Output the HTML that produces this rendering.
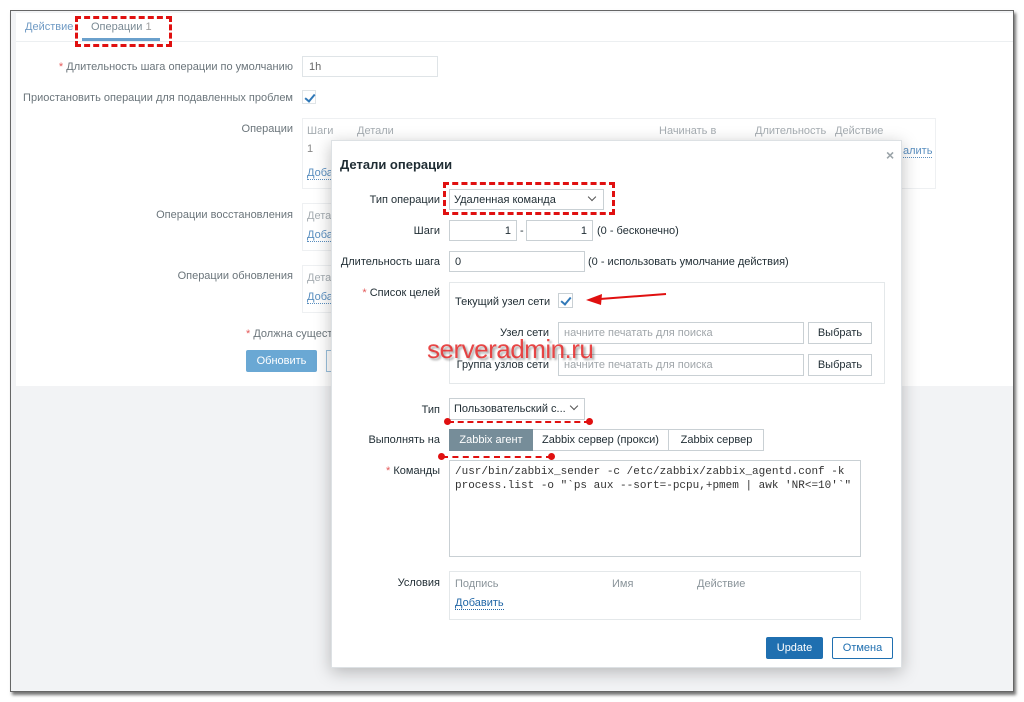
<!DOCTYPE html>
<html><head><meta charset="utf-8"><style>
*{box-sizing:border-box;margin:0;padding:0}
body{width:1024px;height:702px;background:#fff;font-family:"Liberation Sans",Arial,sans-serif;font-size:11px;color:#1f2c33;position:relative;overflow:hidden}
.a{position:absolute;white-space:nowrap}
.frame{left:10px;top:10px;width:1004px;height:682px;border:1px solid #666;background:#f2f3f5;box-shadow:2px 3px 3px rgba(0,0,0,.55)}
.panel{left:16px;top:13px;width:997px;height:373px;background:#fff}
.lbl{color:#6b757b;text-align:right}
.in{border:1px solid #dfe4e7;background:#fff}
.din{border:1px solid #c9d0d4;background:#fff}
.st{color:#e45959}
.lnk{color:#5a8fc0;border-bottom:1px dotted #5a8fc0}
.dl{color:#1f2c33;text-align:right}
.btn{border:1px solid #c9d0d4;background:#fff;text-align:center;line-height:20px;color:#1f2c33}
.red{border:3px dashed #e01010}
.chev{position:absolute;width:6px;height:6px;border-right:1.3px solid #555;border-bottom:1.3px solid #555;transform:rotate(45deg)}
.chk{border:1px solid #c9d0d4;background:#fff;width:15px;height:15px}
.chk:after{content:"";position:absolute;left:4px;top:1px;width:4px;height:8px;border-right:2px solid #3179b8;border-bottom:2px solid #3179b8;transform:rotate(40deg)}
.dots{border-top:2px dashed #e01010;height:0}
.dot{width:7px;height:7px;border-radius:50%;background:#e01010}
</style></head><body>
<div class="a frame"></div>
<div class="a panel"></div>
<div class="a" style="left:16px;top:41px;width:997px;height:1px;background:#eceff1"></div>
<div class="a" style="left:25px;top:21px;color:#6f9ac4">Действие</div>
<div class="a" style="left:91px;top:21px;color:#7a8a94">Операции <span style="color:#a0a0a0">1</span></div>
<div class="a" style="left:82px;top:38px;width:78px;height:3px;background:#6aa0cc"></div>
<div class="a red" style="left:75px;top:16px;width:97px;height:31px"></div>

<div class="a lbl" style="right:731px;top:61px"><span class="st">*</span> Длительность шага операции по умолчанию</div>
<div class="a in" style="left:302px;top:56px;width:136px;height:21px;padding:4px 6px;color:#666">1h</div>
<div class="a lbl" style="right:731px;top:92px">Приостановить операции для подавленных проблем</div>
<div class="a chk" style="left:302px;top:90px;width:14px;height:14px;border-color:#dfe4e7"></div>
<div class="a lbl" style="right:731px;top:123px">Операции</div>
<div class="a" style="left:302px;top:118px;width:634px;height:71px;border:1px solid #eef0f2"></div>
<div class="a" style="left:307px;top:125px;color:#a6adb2">Шаги</div>
<div class="a" style="left:357px;top:125px;color:#a6adb2">Детали</div>
<div class="a" style="left:659px;top:125px;color:#a6adb2">Начинать в</div>
<div class="a" style="left:755px;top:125px;color:#a6adb2">Длительность</div>
<div class="a" style="left:835px;top:125px;color:#a6adb2">Действие</div>
<div class="a" style="left:307px;top:143px;color:#888">1</div>
<div class="a lnk" style="left:307px;top:167px">Доба</div>
<div class="a lnk" style="left:903px;top:145px">алить</div>
<div class="a lbl" style="right:731px;top:209px">Операции восстановления</div>
<div class="a" style="left:302px;top:203px;width:40px;height:48px;border:1px solid #eef0f2"></div>
<div class="a" style="left:307px;top:210px;color:#a6adb2">Дета</div>
<div class="a lnk" style="left:307px;top:229px">Доба</div>
<div class="a lbl" style="right:731px;top:270px">Операции обновления</div>
<div class="a" style="left:302px;top:265px;width:40px;height:48px;border:1px solid #eef0f2"></div>
<div class="a" style="left:307px;top:272px;color:#a6adb2">Дета</div>
<div class="a lnk" style="left:307px;top:291px">Доба</div>
<div class="a lbl" style="left:246px;top:328px"><span class="st">*</span> Должна сущест</div>
<div class="a" style="left:246px;top:350px;width:71px;height:22px;background:#6aa8d4;color:#fff;text-align:center;line-height:22px;border-radius:2px">Обновить</div>
<div class="a" style="left:326px;top:350px;width:10px;height:22px;border:1px solid #9bc0dd"></div>

<!-- dialog -->
<div class="a" style="left:331px;top:140px;width:571px;height:528px;background:#fff;border:1px solid #dde1e4;box-shadow:0 4px 16px rgba(0,0,0,.25)"></div>
<div class="a" style="left:340px;top:157px;font-size:13px;font-weight:bold;color:#1f2c33">Детали операции</div>
<div class="a" style="left:886px;top:147px;color:#9aa3a8;font-size:14px;font-weight:bold">×</div>

<div class="a dl" style="right:584px;top:194px">Тип операции</div>
<div class="a din" style="left:449px;top:189px;width:155px;height:21px;padding:4px 4px">Удаленная команда</div>
<div class="chev" style="left:589px;top:194px"></div>
<div class="a red" style="left:443px;top:182px;width:172px;height:33px"></div>

<div class="a dl" style="right:584px;top:225px">Шаги</div>
<div class="a din" style="left:449px;top:220px;width:68px;height:21px;padding:4px 5px;text-align:right">1</div>
<div class="a" style="left:520px;top:225px">-</div>
<div class="a din" style="left:526px;top:220px;width:67px;height:21px;padding:4px 5px;text-align:right">1</div>
<div class="a" style="left:597px;top:225px">(0 - бесконечно)</div>

<div class="a dl" style="right:584px;top:256px">Длительность шага</div>
<div class="a din" style="left:449px;top:251px;width:136px;height:21px;padding:4px 5px">0</div>
<div class="a" style="left:588px;top:256px">(0 - использовать умолчание действия)</div>

<div class="a dl" style="right:584px;top:287px"><span class="st">*</span> Список целей</div>
<div class="a" style="left:449px;top:282px;width:436px;height:102px;border:1px solid #e4e8ea"></div>
<div class="a" style="left:455px;top:296px">Текущий узел сети</div>
<div class="a chk" style="left:558px;top:293px"></div>
<svg class="a" style="left:582px;top:290px" width="86" height="16"><path d="M84 4 L18 9" stroke="#e01010" stroke-width="2"/><path d="M4 10 L20 4 L19 15 Z" fill="#e01010"/></svg>
<div class="a dl" style="right:475px;top:327px">Узел сети</div>
<div class="a din" style="left:558px;top:322px;width:246px;height:22px;padding:4px 5px;color:#a0a6aa">начните печатать для поиска</div>
<div class="a btn" style="left:808px;top:322px;width:64px;height:22px">Выбрать</div>
<div class="a dl" style="right:475px;top:359px">Группа узлов сети</div>
<div class="a din" style="left:558px;top:354px;width:246px;height:22px;padding:4px 5px;color:#a0a6aa">начните печатать для поиска</div>
<div class="a btn" style="left:808px;top:354px;width:64px;height:22px">Выбрать</div>
<div class="a" style="left:427px;top:334px;font-size:26px;letter-spacing:-0.5px;color:rgba(230,40,40,.85);text-shadow:2px 2px 2px rgba(0,0,0,.35)">serveradmin.ru</div>

<div class="a dl" style="right:584px;top:404px">Тип</div>
<div class="a din" style="left:449px;top:398px;width:136px;height:22px;padding:4px 4px">Пользовательский с...</div>
<div class="chev" style="left:571px;top:403px"></div>
<div class="a dots" style="left:448px;top:421px;width:142px"></div>
<div class="a dot" style="left:444px;top:418px"></div><div class="a dot" style="left:586px;top:418px"></div>

<div class="a dl" style="right:584px;top:434px">Выполнять на</div>
<div class="a" style="left:449px;top:429px;width:315px;height:22px;border:1px solid #c9d0d4"></div>
<div class="a" style="left:449px;top:429px;width:84px;height:22px;background:#768d99;color:#fff;text-align:center;line-height:22px">Zabbix агент</div>
<div class="a" style="left:533px;top:429px;width:136px;height:22px;border-right:1px solid #c9d0d4;text-align:center;line-height:22px">Zabbix сервер (прокси)</div>
<div class="a" style="left:669px;top:429px;width:95px;height:22px;text-align:center;line-height:22px">Zabbix сервер</div>
<div class="a dots" style="left:442px;top:456px;width:110px"></div>
<div class="a dot" style="left:438px;top:453px"></div><div class="a dot" style="left:548px;top:453px"></div>

<div class="a dl" style="right:584px;top:465px"><span class="st">*</span> Команды</div>
<div class="a din" style="left:449px;top:460px;width:412px;height:97px;padding:4px 5px;font-family:'Liberation Mono',monospace;font-size:11px;line-height:14px;white-space:pre;color:#333">/usr/bin/zabbix_sender -c /etc/zabbix/zabbix_agentd.conf -k
process.list -o "`ps aux --sort=-pcpu,+pmem | awk 'NR&lt;=10'`"</div>

<div class="a dl" style="right:584px;top:577px">Условия</div>
<div class="a" style="left:449px;top:571px;width:412px;height:49px;border:1px solid #e4e8ea"></div>
<div class="a" style="left:455px;top:578px;color:#8a949a">Подпись</div>
<div class="a" style="left:612px;top:578px;color:#8a949a">Имя</div>
<div class="a" style="left:697px;top:578px;color:#8a949a">Действие</div>
<div class="a lnk" style="left:455px;top:597px;color:#1f65a6;border-color:#1f65a6">Добавить</div>

<div class="a" style="left:766px;top:637px;width:57px;height:22px;background:#1f6fb0;color:#fff;text-align:center;line-height:22px;border-radius:2px">Update</div>
<div class="a" style="left:832px;top:637px;width:61px;height:22px;border:1px solid #1f6fb0;color:#1f6fb0;text-align:center;line-height:20px;border-radius:2px">Отмена</div>
</body></html>
